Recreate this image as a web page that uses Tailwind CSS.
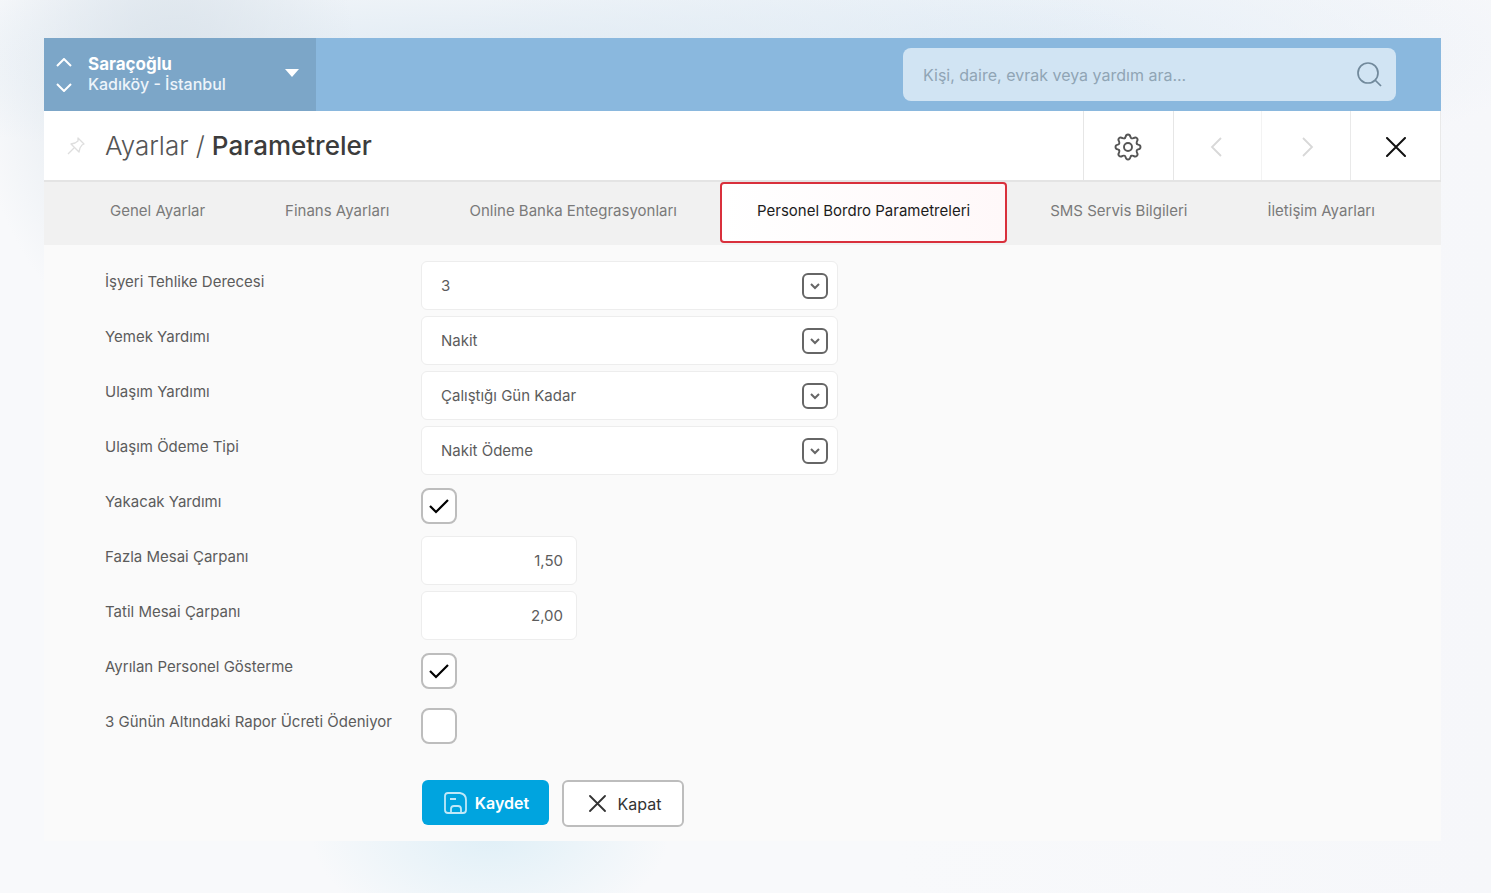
<!DOCTYPE html>
<html lang="tr">
<head>
    <meta charset="UTF-8">
    <meta name="viewport" content="width=device-width, initial-scale=1.0">
    <title>Ayarlar / Parametreler</title>
    <script src="https://cdn.jsdelivr.net/npm/@tailwindcss/browser@4"></script>
</head>
<body class="min-h-screen bg-[#f8f9fb] bg-[radial-gradient(ellipse_190px_260px_at_170px_90px,#d9e2ea,transparent),radial-gradient(ellipse_700px_110px_at_500px_60px,#dfeaf3,transparent),radial-gradient(ellipse_550px_130px_at_1000px_50px,#e3edf6,transparent),radial-gradient(ellipse_180px_110px_at_490px_830px,#dfeff7,transparent),linear-gradient(90deg,#f8f9fb_60%,#f6f7fa)] font-[Inter,'Liberation_Sans',sans-serif]">
    <div class="pl-11 pr-[50px] pt-[38px] pb-[52px]">
        <!-- Top bar -->
        <header class="flex h-[73px] justify-between bg-[#8ab8de]">
            <div class="flex w-[272px] items-center bg-[#7ca6c8] pl-3 pr-[17px] text-white">
                <div class="flex flex-col gap-4">
                    <button type="button" aria-label="Önceki site"><svg class="block" width="16" height="9" viewBox="0 0 16 9" fill="none" stroke="currentColor" stroke-width="2"><path d="M1 8l7-7 7 7"/></svg></button>
                    <button type="button" aria-label="Sonraki site"><svg class="block" width="16" height="9" viewBox="0 0 16 9" fill="none" stroke="currentColor" stroke-width="2"><path d="M1 1l7 7 7-7"/></svg></button>
                </div>
                <div class="ml-4 flex-1 pb-[2px] leading-5">
                    <p class="text-[17px] font-bold leading-5">Saraçoğlu</p>
                    <p class="text-base leading-5 font-medium text-[#edf4fa]">Kadıköy - İstanbul</p>
                </div>
                <button type="button" aria-label="Site seç" class="pb-[3px]"><svg class="block" width="14" height="8" viewBox="0 0 14 8" fill="currentColor"><path d="M0 0h14L7 8z"/></svg></button>
            </div>
            <form class="mr-[45px] flex w-[493px] items-center self-center rounded-lg bg-[#d1e4f3] pl-5 pr-[13px]">
                <input type="text" aria-label="Ara" placeholder="Kişi, daire, evrak veya yardım ara..." class="h-[53px] min-w-0 flex-1 text-base text-gray-600 outline-none placeholder:text-[#90a5b5]">
                <button type="button" aria-label="Ara" class="text-[#71899b]"><svg class="block" width="28" height="28" viewBox="0 0 28 28" fill="none" stroke="currentColor" stroke-width="1.7"><circle cx="13" cy="12" r="10"/><path d="M20 19l6 6"/></svg></button>
            </form>
        </header>

        <!-- Page title -->
        <div class="flex h-[71px] border-b-2 border-[#e4e4e4] bg-white">
            <div class="flex flex-1 items-center pl-[22px]">
                <button type="button" aria-label="Sabitle" class="text-[#dedede]"><svg class="block" width="20" height="20" viewBox="0 0 20 20" fill="none" stroke="currentColor" stroke-width="1.3" stroke-linejoin="round"><path d="M12 2l6 6-2 1-2 3-1 4-8-8 4-1 3-2zM8 12l-6 6"/></svg></button>
                <h1 class="ml-[19px] text-[26px] leading-8 font-medium text-[#3c3c3c]"><span class="font-light text-[#555]">Ayarlar /</span> Parametreler</h1>
            </div>
            <button type="button" aria-label="Ayarlar" class="flex w-[90px] items-center justify-center border-l border-[#e6e6e6] pt-[2px] pr-[2px] text-[#555]">
                <svg width="28" height="28" viewBox="-14 -14 28 28" fill="none" stroke="currentColor" stroke-width="1.9" stroke-linejoin="round" stroke-linecap="round">
                    <defs><path id="cog" d="M-3.300-8.800Q-2.700-9.200-2.400-10.200Q-2-12.500 0-12.500Q2-12.500 2.400-10.200Q2.700-9.200 3.300-8.800Q3.900-8.400 5.500-8.900Q7.500-10.300 8.900-8.900Q10.300-7.500 8.900-5.500Q8.400-3.900 8.800-3.300"/></defs>
                    <use href="#cog"/><use href="#cog" transform="rotate(90)"/><use href="#cog" transform="rotate(180)"/><use href="#cog" transform="rotate(270)"/>
                    <circle r="4"/>
                </svg>
            </button>
            <button type="button" aria-label="Önceki" class="flex w-[88px] items-center justify-center border-l border-[#e6e6e6] pt-[2px] pr-1 text-[#d8d8d8]">
                <svg width="12" height="20" viewBox="0 0 12 20" fill="none" stroke="currentColor" stroke-width="1.8"><path d="M11 1l-9 9 9 9"/></svg>
            </button>
            <button type="button" aria-label="Sonraki" class="flex w-[89px] items-center justify-center border-l border-[#f3f3f3] pt-[2px] pl-1 text-[#d8d8d8]">
                <svg width="12" height="20" viewBox="0 0 12 20" fill="none" stroke="currentColor" stroke-width="1.8"><path d="M1 1l9 9-9 9"/></svg>
            </button>
            <button type="button" aria-label="Kapat" class="flex w-[91px] items-center justify-center border-x border-[#e9e9e9] pt-[2px] text-[#111]">
                <svg width="20" height="20" viewBox="0 0 20 20" fill="none" stroke="currentColor" stroke-width="2" stroke-linecap="round"><path d="M1 1l18 18M19 1L1 19"/></svg>
            </button>
        </div>

        <!-- Tabs -->
        <nav class="flex h-[63px] items-start gap-[6px] bg-[#f1f1f1] pl-[29px] text-[15px] leading-5 whitespace-nowrap text-[#7a7a7a]">
            <a href="#" class="px-[37px] pt-[19px]">Genel Ayarlar</a>
            <a href="#" class="px-[37px] pt-[19px]">Finans Ayarları</a>
            <a href="#" class="px-[37px] pt-[19px]">Online Banka Entegrasyonları</a>
            <a href="#" aria-current="page" class="h-[61px] rounded-sm border-2 border-[#d9303c] bg-linear-to-r from-white to-[#fff8f9] px-[35px] pt-[17px] text-[#1c1c1c]">Personel Bordro Parametreleri</a>
            <a href="#" class="px-[37px] pt-[19px]">SMS Servis Bilgileri</a>
            <a href="#" class="px-[37px] pt-[19px]">İletişim Ayarları</a>
        </nav>

        <form class="bg-[#fafafa] pl-[61px] pt-4 pb-[14px] text-[15px] leading-5 text-[#5c5c5c]">
            <div class="grid auto-rows-[49px] grid-cols-[316px_1fr] gap-y-[6px]">
                <label for="tehlike" class="pt-[11px]">İşyeri Tehlike Derecesi</label>
                <div class="grid w-[417px] items-center">
                    <select id="tehlike" class="col-start-1 row-start-1 h-[49px] appearance-none rounded-md border border-[#ededed] bg-white px-[19px]"><option>3</option></select>
                    <svg class="pointer-events-none col-start-1 row-start-1 mr-[10px] justify-self-end" width="26" height="26" viewBox="0 0 26 26" fill="none" stroke="#666" stroke-width="2"><rect x="1" y="1" width="24" height="24" rx="5"/><path d="M9 11l4 4 4-4"/></svg>
                </div>

                <label for="yemek" class="pt-[11px]">Yemek Yardımı</label>
                <div class="grid w-[417px] items-center">
                    <select id="yemek" class="col-start-1 row-start-1 h-[49px] appearance-none rounded-md border border-[#ededed] bg-white px-[19px]"><option>Nakit</option></select>
                    <svg class="pointer-events-none col-start-1 row-start-1 mr-[10px] justify-self-end" width="26" height="26" viewBox="0 0 26 26" fill="none" stroke="#666" stroke-width="2"><rect x="1" y="1" width="24" height="24" rx="5"/><path d="M9 11l4 4 4-4"/></svg>
                </div>

                <label for="ulasim" class="pt-[11px]">Ulaşım Yardımı</label>
                <div class="grid w-[417px] items-center">
                    <select id="ulasim" class="col-start-1 row-start-1 h-[49px] appearance-none rounded-md border border-[#ededed] bg-white px-[19px]"><option>Çalıştığı Gün Kadar</option></select>
                    <svg class="pointer-events-none col-start-1 row-start-1 mr-[10px] justify-self-end" width="26" height="26" viewBox="0 0 26 26" fill="none" stroke="#666" stroke-width="2"><rect x="1" y="1" width="24" height="24" rx="5"/><path d="M9 11l4 4 4-4"/></svg>
                </div>

                <label for="odeme" class="pt-[11px]">Ulaşım Ödeme Tipi</label>
                <div class="grid w-[417px] items-center">
                    <select id="odeme" class="col-start-1 row-start-1 h-[49px] appearance-none rounded-md border border-[#ededed] bg-white px-[19px]"><option>Nakit Ödeme</option></select>
                    <svg class="pointer-events-none col-start-1 row-start-1 mr-[10px] justify-self-end" width="26" height="26" viewBox="0 0 26 26" fill="none" stroke="#666" stroke-width="2"><rect x="1" y="1" width="24" height="24" rx="5"/><path d="M9 11l4 4 4-4"/></svg>
                </div>

                <label for="yakacak" class="pt-[11px]">Yakacak Yardımı</label>
                <div class="grid size-9 place-items-center self-center">
                    <input id="yakacak" type="checkbox" checked class="peer col-start-1 row-start-1 size-9 appearance-none rounded-lg border-2 border-[#bdbdbd] bg-white">
                    <svg class="pointer-events-none invisible col-start-1 row-start-1 peer-checked:visible" width="20" height="16" viewBox="0 0 20 16" fill="none" stroke="#000" stroke-width="2.2"><path d="M1 8l6 6L19 2"/></svg>
                </div>

                <label for="fazla" class="pt-[11px]">Fazla Mesai Çarpanı</label>
                <input id="fazla" type="text" value="1,50" class="h-[49px] w-[156px] rounded-md border border-[#ededed] bg-white px-[13px] text-right">

                <label for="tatil" class="pt-[11px]">Tatil Mesai Çarpanı</label>
                <input id="tatil" type="text" value="2,00" class="h-[49px] w-[156px] rounded-md border border-[#ededed] bg-white px-[13px] text-right">

                <label for="ayrilan" class="pt-[11px]">Ayrılan Personel Gösterme</label>
                <div class="grid size-9 place-items-center self-center">
                    <input id="ayrilan" type="checkbox" checked class="peer col-start-1 row-start-1 size-9 appearance-none rounded-lg border-2 border-[#bdbdbd] bg-white">
                    <svg class="pointer-events-none invisible col-start-1 row-start-1 peer-checked:visible" width="20" height="16" viewBox="0 0 20 16" fill="none" stroke="#000" stroke-width="2.2"><path d="M1 8l6 6L19 2"/></svg>
                </div>

                <label for="rapor" class="pt-[11px]">3 Günün Altındaki Rapor Ücreti Ödeniyor</label>
                <div class="grid size-9 place-items-center self-center">
                    <input id="rapor" type="checkbox" class="peer col-start-1 row-start-1 size-9 appearance-none rounded-lg border-2 border-[#bdbdbd] bg-white">
                    <svg class="pointer-events-none invisible col-start-1 row-start-1 peer-checked:visible" width="20" height="16" viewBox="0 0 20 16" fill="none" stroke="#000" stroke-width="2.2"><path d="M1 8l6 6L19 2"/></svg>
                </div>
            </div>

            <!-- Actions -->
            <div class="mt-[30px] ml-[317px] flex items-start gap-[13px] text-base">
                <button type="submit" class="flex h-[45px] w-[127px] items-center justify-center gap-2 rounded-md bg-[#00a4df] pl-[2px] font-semibold text-white">
                    <svg width="23" height="22" viewBox="0 0 23 22" fill="none" stroke="#bfe8f8" stroke-width="1.8" stroke-linejoin="round"><path d="M4 1h12q6 1 6 7v10q0 3-3 3H4q-3 0-3-3V4q0-3 3-3zM6 7h6M7 21v-4q0-3 3-3h4q3 0 3 3v4"/></svg>
                    Kaydet
                </button>
                <button type="button" class="flex h-[47px] w-[122px] items-center justify-center gap-3 rounded-md border-2 border-[#bdbdbd] bg-white pl-1 text-[#333]">
                    <svg width="17" height="17" viewBox="0 0 17 17" fill="none" stroke="#333" stroke-width="1.8" stroke-linecap="round"><path d="M1 1l15 15M16 1L1 16"/></svg>
                    Kapat
                </button>
            </div>
        </form>
    </div>
</body>
</html>
